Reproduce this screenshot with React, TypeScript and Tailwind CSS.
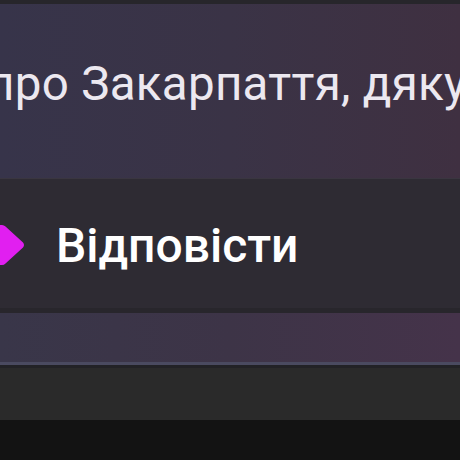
import React from "react";

export default function App() {
  return (
    <div className="w-[460px] h-[460px] overflow-hidden flex flex-col bg-[#121212]" style={{ fontFamily: "Roboto, 'Noto Sans', sans-serif" }}>
      <div className="h-[4px] bg-[#27262b]" />
      <div className="h-[174px] bg-gradient-to-r from-[#37344a] via-[#3a3346] to-[#3f3041] flex items-center overflow-hidden">
        <div className="ml-[-13px] whitespace-nowrap text-[47.5px] leading-none text-[#ece8f0] tracking-[0.3px] mt-[-12px]">
          про Закарпаття, дякую
        </div>
      </div>
      <div className="h-[1px] bg-[#3a3640]" />
      <div className="h-[129px] bg-[#2e2b33] flex items-center">
        <svg width="26" height="40" viewBox="0 0 26 40" className="shrink-0 mt-[3px]">
          <path d="M-14 2 Q-14 0 -12 0 L2 0 Q4 0 5.5 1.5 L23 17.5 Q25 20 23 22.5 L5.5 38.5 Q4 40 2 40 L-12 40 Q-14 40 -14 38 Z" fill="#e11ff0" />
        </svg>
        <div className="ml-[30px] text-[48px] leading-none font-medium text-white pt-[4px]">Відповісти</div>
      </div>
      <div className="h-[5px] bg-[#28262c]" />
      <div className="h-[49px] bg-gradient-to-r from-[#393649] via-[#3d3447] to-[#45334a]" />
      <div className="h-[3px] bg-[#4a4a60]" />
      <div className="h-[3px] bg-[#222226]" />
      <div className="h-[52px] bg-[#2a2a2a]" />
      <div className="flex-1 bg-[#131313]" />
    </div>
  );
}
